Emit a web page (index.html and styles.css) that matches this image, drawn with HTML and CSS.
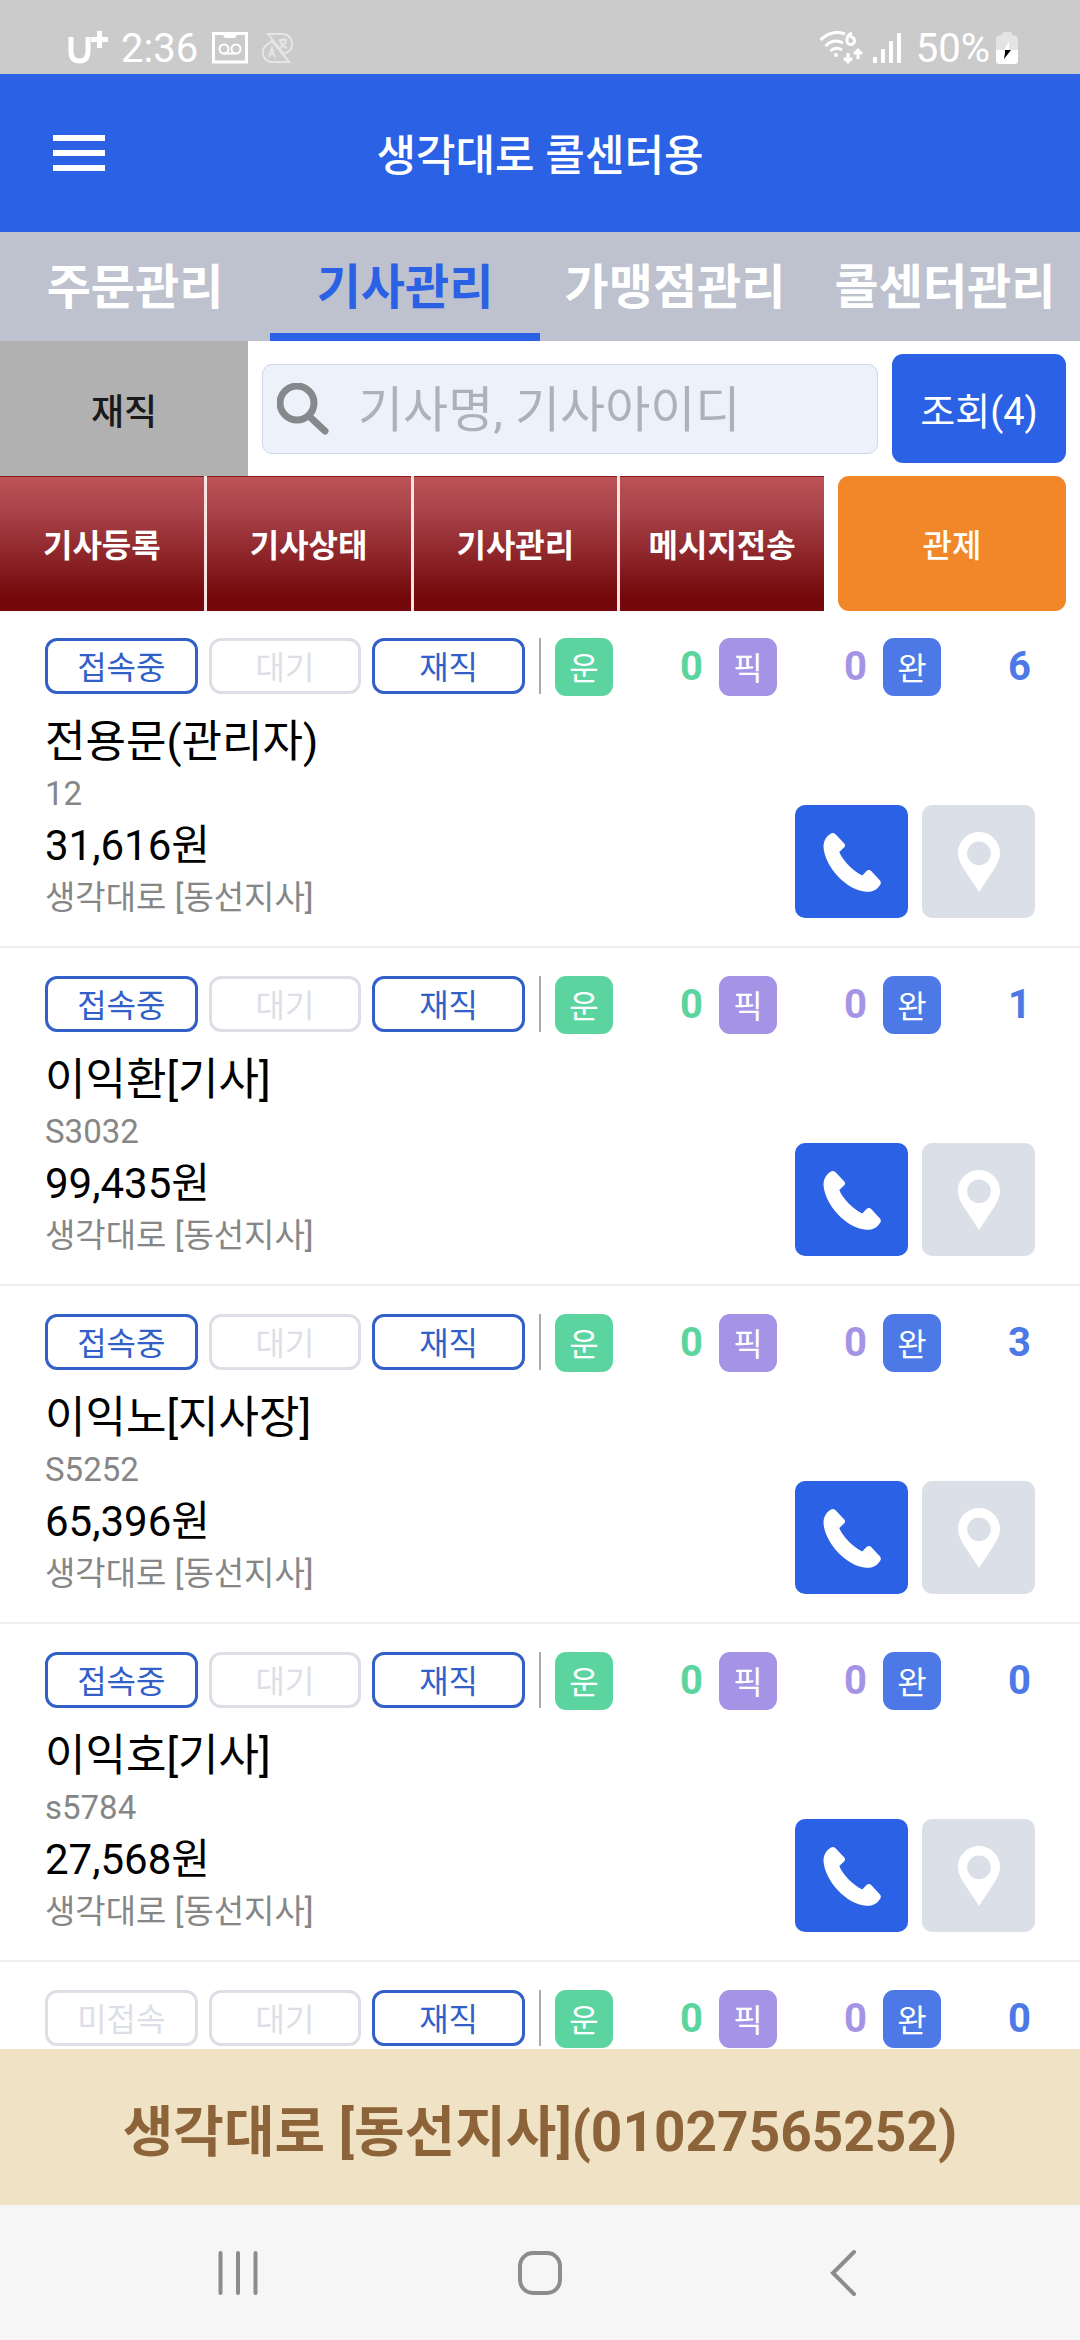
FILE: index.html
```html
<!DOCTYPE html>
<html lang="ko">
<head>
<meta charset="utf-8">
<meta name="viewport" content="width=device-width">
<title>생각대로 콜센터용</title>
<link rel="stylesheet" href="styles.css">
</head>
<body>
<svg class="sprite" aria-hidden="true">
  <symbol id="phone" viewBox="0 0 58 60">
    <path d="M8 1.500C9.500.5 11 .8 12.300 2.100L21.300 11.500C22.400 12.800 22.300 14 21.300 15.200L16.300 20C20 29 29.500 38.500 39.300 43.500L43.500 39C44.800 37.700 46.800 37.700 48.200 39L57 48.500C58.200 50 58 51.500 57 53C53.500 58.500 49 60 43.500 59.800C23 58.500 1.500 34 .5 15C.5 9 3 4.500 8 1.500Z"/>
  </symbol>
  <symbol id="pin" viewBox="0 0 42 60">
    <path fill-rule="evenodd" d="M21 0C9.400 0 0 9.500 0 21C0 27 3 32 5.500 36.500L21 60L36.500 36.500C39 32 42 27 42 21C42 9.500 32.600 0 21 0ZM21 9.500A11.800 11.800 0 1 1 21 33.100A11.800 11.800 0 1 1 21 9.500Z"/>
  </symbol>
</svg>

<div class="system-bar">
  <svg class="carrier" viewBox="0 0 44 34" aria-label="U+"><path d="M4 6V20Q4 30 12.500 30T21 20V6M24 8.500H41M32.500 0V17"/></svg>
  <span class="clock">2:36</span>
  <svg class="notice" viewBox="0 0 36 32" aria-hidden="true"><path class="frame" d="M1.500 1.500H34.500V30H1.500Z"/><path class="fill" d="M9 0H27L23 6H13Z"/><path class="tape" d="M12 21.500H24"/><circle class="tape" cx="12" cy="17" r="4.500"/><circle class="tape" cx="24" cy="17" r="4.500"/></svg>
  <svg class="translate" viewBox="0 0 32 30" aria-hidden="true"><path d="M6 1H21A10 10 0 0 1 26 19L22 21L6 1ZM6 11A9.500 9.500 0 0 0 11 29H27L10 8ZM7 24L10 15L13 24M8 21H12M17 7H25M21 5V7M18 15Q23 12 24 7M18 8Q20 13 25 15"/></svg>
  <span class="spacer"></span>
  <svg class="wifi" viewBox="0 0 44 34" aria-hidden="true"><path d="M1.500 9Q13 -2 26 3M6.500 15Q15 7 24 12M11.500 20Q17 15 23 19M33 2Q28 4 28 9A3.800 3.800 0 1 0 31 6M29 22V31M25 27L29 31L33 27M39 28V19M35 23L39 19L43 23"/><circle class="fill" cx="17" cy="24" r="2"/></svg>
  <svg class="signal" viewBox="0 0 28 30" aria-hidden="true"><path d="M2 24V30M10 16V30M18 8V30M26 0V30"/></svg>
  <span class="battery-level">50%</span>
  <svg class="battery" viewBox="0 0 22 32" aria-hidden="true"><path class="empty" d="M6 2Q6 0 8 0H14Q16 0 16 2V3Q22 3 22 8V18H0V8Q0 3 6 3Z"/><path class="fill" d="M0 18H22V29Q22 32 19 32H3Q0 32 0 29ZM8 18L13 9V18Z"/><path class="bolt" d="M9 18H15L8 27L9 21Z"/></svg>
</div>

<header class="app-bar">
  <button class="menu" type="button" aria-label="메뉴"><span></span><span></span><span></span></button>
  <h1>생각대로 콜센터용</h1>
</header>

<nav class="tabs">
  <a href="#orders">주문관리</a>
  <a href="#drivers" class="active" aria-current="page">기사관리</a>
  <a href="#stores">가맹점관리</a>
  <a href="#center">콜센터관리</a>
</nav>

<form class="filters">
  <button class="employment" type="button">재직</button>
  <label class="search">
    <svg viewBox="0 0 52 52" aria-hidden="true"><circle cx="20" cy="20" r="17"/><path d="M33 34L48 48"/></svg>
    <input type="text" aria-label="기사 검색" placeholder="기사명, 기사아이디">
  </label>
  <button class="lookup" type="button">조회(4)</button>
</form>

<div class="actions">
  <div class="action-group">
    <button type="button">기사등록</button>
    <button type="button">기사상태</button>
    <button type="button">기사관리</button>
    <button type="button">메시지전송</button>
  </div>
  <button class="control" type="button">관제</button>
</div>

<main class="drivers">
  <article class="driver">
    <div class="status">
      <div class="badges"><span class="badge on">접속중</span><span class="badge">대기</span><span class="badge on">재직</span></div>
      <div class="counts"><div class="count run"><span>운</span><b>0</b></div><div class="count pick"><span>픽</span><b>0</b></div><div class="count done"><span>완</span><b>6</b></div></div>
    </div>
    <div class="detail">
      <div class="info"><h2>전용문(관리자)</h2><p class="sub">12</p><p class="amount">31,616원</p><p class="sub">생각대로 [동선지사]</p></div>
      <button class="call" type="button" aria-label="전화"><svg><use href="#phone"/></svg></button>
      <button class="locate" type="button" aria-label="위치"><svg><use href="#pin"/></svg></button>
    </div>
  </article>
  <article class="driver">
    <div class="status">
      <div class="badges"><span class="badge on">접속중</span><span class="badge">대기</span><span class="badge on">재직</span></div>
      <div class="counts"><div class="count run"><span>운</span><b>0</b></div><div class="count pick"><span>픽</span><b>0</b></div><div class="count done"><span>완</span><b>1</b></div></div>
    </div>
    <div class="detail">
      <div class="info"><h2>이익환[기사]</h2><p class="sub">S3032</p><p class="amount">99,435원</p><p class="sub">생각대로 [동선지사]</p></div>
      <button class="call" type="button" aria-label="전화"><svg><use href="#phone"/></svg></button>
      <button class="locate" type="button" aria-label="위치"><svg><use href="#pin"/></svg></button>
    </div>
  </article>
  <article class="driver">
    <div class="status">
      <div class="badges"><span class="badge on">접속중</span><span class="badge">대기</span><span class="badge on">재직</span></div>
      <div class="counts"><div class="count run"><span>운</span><b>0</b></div><div class="count pick"><span>픽</span><b>0</b></div><div class="count done"><span>완</span><b>3</b></div></div>
    </div>
    <div class="detail">
      <div class="info"><h2>이익노[지사장]</h2><p class="sub">S5252</p><p class="amount">65,396원</p><p class="sub">생각대로 [동선지사]</p></div>
      <button class="call" type="button" aria-label="전화"><svg><use href="#phone"/></svg></button>
      <button class="locate" type="button" aria-label="위치"><svg><use href="#pin"/></svg></button>
    </div>
  </article>
  <article class="driver">
    <div class="status">
      <div class="badges"><span class="badge on">접속중</span><span class="badge">대기</span><span class="badge on">재직</span></div>
      <div class="counts"><div class="count run"><span>운</span><b>0</b></div><div class="count pick"><span>픽</span><b>0</b></div><div class="count done"><span>완</span><b>0</b></div></div>
    </div>
    <div class="detail">
      <div class="info"><h2>이익호[기사]</h2><p class="sub">s5784</p><p class="amount">27,568원</p><p class="sub">생각대로 [동선지사]</p></div>
      <button class="call" type="button" aria-label="전화"><svg><use href="#phone"/></svg></button>
      <button class="locate" type="button" aria-label="위치"><svg><use href="#pin"/></svg></button>
    </div>
  </article>
  <article class="driver">
    <div class="status">
      <div class="badges"><span class="badge">미접속</span><span class="badge">대기</span><span class="badge on">재직</span></div>
      <div class="counts"><div class="count run"><span>운</span><b>0</b></div><div class="count pick"><span>픽</span><b>0</b></div><div class="count done"><span>완</span><b>0</b></div></div>
    </div>
  </article>
</main>

<footer class="branch">생각대로 [동선지사](01027565252)</footer>

<div class="nav-bar">
  <button type="button" aria-label="최근 앱"><svg viewBox="0 0 48 48"><path d="M6.500 4V44M24 4V44M41.500 4V44"/></svg></button>
  <button type="button" aria-label="홈"><svg viewBox="0 0 48 48"><rect x="4" y="4" width="40" height="40" rx="13"/></svg></button>
  <button type="button" aria-label="뒤로"><svg viewBox="0 0 48 48"><path d="M36 3L15 24L36 45"/></svg></button>
</div>
</body>
</html>
```
FILE: styles.css
```css
* {
  box-sizing: border-box;
}

body {
  margin: 0;
  height: 100vh;
  display: flex;
  flex-direction: column;
  background: #fff;
  color: #000;
  font-family: Roboto, "Noto Sans CJK KR", sans-serif;
}

body > * {
  flex: none;
}

button {
  margin: 0;
  padding: 0;
  border: 0;
  background: none;
  color: inherit;
  font: inherit;
}

h1, h2, p {
  margin: 0;
  font-weight: 400;
}

.sprite {
  display: none;
}

/* System status bar */
.system-bar {
  height: 74px;
  padding: 22px 62px 0 67px;
  display: flex;
  align-items: center;
  background: #cbcbcb;
  color: #fff;
  font-size: 40px;
}

.system-bar svg {
  fill: none;
  stroke: #fff;
}

.system-bar .fill {
  fill: #fff;
  stroke: none;
}

.system-bar .spacer {
  flex: 1;
}

.carrier {
  width: 44px;
  height: 34px;
  margin-right: 10px;
  stroke-width: 5;
}

.notice {
  width: 36px;
  height: 32px;
  margin: 0 14px;
  stroke-width: 3;
}

.notice .tape {
  stroke-width: 2;
}

.translate {
  width: 32px;
  height: 30px;
  opacity: 0.5;
  stroke-width: 2;
}

.wifi {
  width: 44px;
  height: 34px;
  margin-right: 10px;
  stroke-width: 3;
}

.signal {
  width: 28px;
  height: 30px;
  margin-right: 15px;
  stroke-width: 4;
}

.battery {
  width: 22px;
  height: 32px;
  margin-left: 6px;
}

.battery .empty {
  fill: #e4e4e4;
  stroke: none;
}

.battery .bolt {
  fill: #000;
  stroke: none;
}

/* App bar */
.app-bar {
  height: 158px;
  padding: 0 53px;
  display: grid;
  grid-template-columns: 52px 1fr 52px;
  align-items: center;
  background: #2a61e5;
  color: #fff;
}

.app-bar h1 {
  padding-bottom: 2px;
  text-align: center;
  font-size: 43px;
  font-weight: 500;
}

.menu {
  display: grid;
  gap: 9px;
}

.menu span {
  height: 6px;
  background: #fff;
}

/* Section tabs */
.tabs {
  height: 109px;
  display: grid;
  grid-template-columns: repeat(4, 1fr);
  background: #bdc2ce;
}

.tabs a {
  display: flex;
  align-items: center;
  justify-content: center;
  border-bottom: 8px solid transparent;
  color: #fff;
  font-size: 48px;
  font-weight: 700;
  text-decoration: none;
}

.tabs .active {
  border-color: #2a61e5;
  color: #2a61e5;
}

/* Search row */
.filters {
  height: 135px;
  padding-right: 14px;
  display: flex;
  align-items: center;
  gap: 14px;
}

.employment {
  width: 248px;
  align-self: stretch;
  background: #b1b1b1;
  color: #1a1a1a;
  font-size: 36px;
  font-weight: 500;
}

.search {
  flex: 1;
  min-width: 0;
  height: 90px;
  padding: 0 14px;
  display: flex;
  align-items: center;
  gap: 29px;
  border: 1px solid #ccd6e8;
  border-radius: 10px;
  background: #edf1fa;
}

.search svg {
  flex: none;
  width: 52px;
  height: 52px;
  fill: none;
  stroke: #85898c;
  stroke-width: 7;
  stroke-linecap: round;
}

.search input {
  flex: 1;
  min-width: 0;
  height: 100%;
  padding: 4px 0 0;
  border: 0;
  background: none;
  font: inherit;
  font-size: 49px;
}

.search input::placeholder {
  color: #adb1b8;
  opacity: 1;
}

.lookup {
  width: 174px;
  height: 109px;
  border-radius: 11px;
  background: #2a61e5;
  color: #fff;
  font-size: 38px;
}

/* Action buttons */
.actions {
  height: 135px;
  padding-right: 14px;
  display: flex;
  gap: 14px;
}

.action-group {
  flex: 1;
  display: grid;
  grid-template-columns: repeat(4, 1fr);
  gap: 3px;
  background: #fbe3e0;
}

.action-group button {
  padding-bottom: 2px;
  border-top: 1px solid #8a1a1e;
  background: linear-gradient(#bb5357, #a9444a 25%, #74080b 90%);
  color: #fff;
  font-size: 32px;
  font-weight: 700;
}

.control {
  width: 228px;
  padding-bottom: 2px;
  border-radius: 11px;
  background: #f18729;
  color: #fff;
  font-size: 32px;
  font-weight: 500;
}

/* Driver list */
.drivers {
  flex: 1;
  min-height: 0;
  overflow: hidden;
}

.driver {
  padding: 27px 45px 25px;
  border-bottom: 2px solid #eee;
}

.driver + .driver {
  padding-top: 28px;
}

.status {
  height: 58px;
  padding-right: 4px;
  display: flex;
}

.badges {
  flex: 495;
  height: 56px;
  padding-right: 14px;
  display: grid;
  grid-template-columns: repeat(3, 1fr);
  gap: 11px;
  border-right: 2px solid #aaa;
}

.badge {
  padding-bottom: 2px;
  display: flex;
  align-items: center;
  justify-content: center;
  border: 3px solid #dddfe7;
  border-radius: 12px;
  color: #dddfe7;
  font-size: 32px;
}

.badge.on {
  border-color: #325fc8;
  color: #325fc8;
}

.counts {
  flex: 491;
  padding-left: 14px;
  display: grid;
  grid-template-columns: repeat(3, 1fr);
  gap: 16px;
}

.count {
  display: flex;
  align-items: center;
  justify-content: space-between;
  font-size: 40px;
}

.count span {
  width: 58px;
  height: 58px;
  padding-bottom: 2px;
  display: flex;
  align-items: center;
  justify-content: center;
  border-radius: 11px;
  color: #fff;
  font-size: 32px;
}

.count b {
  padding-bottom: 2px;
}

.run { color: #5bd4a0; }
.run span { background: #5bd4a0; }
.pick { color: #a594e5; }
.pick span { background: #a594e5; }
.done { color: #4d79e6; }
.done span { background: #4d79e6; }

.detail {
  margin-top: 17px;
  display: flex;
  align-items: flex-end;
  gap: 14px;
}

.info {
  flex: 1;
}

.info h2,
.info .amount {
  font-size: 42px;
  line-height: 58px;
}

.info h2 {
  font-size: 44px;
}

.info .sub {
  color: #868686;
  font-size: 33px;
  line-height: 46px;
}

.call,
.locate {
  width: 113px;
  height: 113px;
  margin-bottom: 3px;
  display: grid;
  place-items: center;
  border-radius: 10px;
  fill: #fff;
}

.call {
  background: #2a61e5;
}

.locate {
  background: #dbdfe8;
}

.call svg,
.locate svg {
  width: 58px;
  height: 60px;
}

/* Branch strip */
.branch {
  height: 156px;
  display: flex;
  align-items: center;
  justify-content: center;
  background: #efe2c5;
  color: #8d6439;
  font-size: 55px;
  font-weight: 700;
}

/* System navigation */
.nav-bar {
  height: 135px;
  padding: 0 87px;
  display: grid;
  grid-template-columns: repeat(3, 1fr);
  place-items: center;
  background: #f6f6f6;
}

.nav-bar button {
  display: flex;
}

.nav-bar svg {
  width: 48px;
  height: 48px;
  fill: none;
  stroke: #8c8c8c;
  stroke-width: 4;
  stroke-linecap: round;
}
```
